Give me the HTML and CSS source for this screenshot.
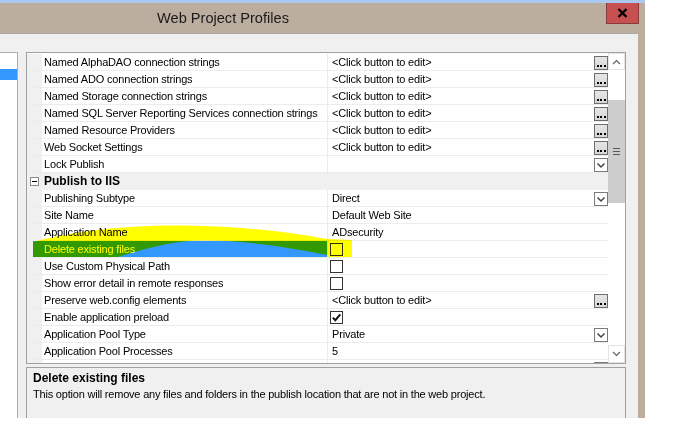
FILE: index.html
```html
<!DOCTYPE html>
<html>
<head>
<meta charset="utf-8">
<title>Web Project Profiles</title>
<link rel="stylesheet" href="styles.css">
</head>
<body>
<div class="window">
  <div class="topstrip"></div>
  <div class="titlebar">
    <div class="title">Web Project Profiles</div>
    <div class="close">
      <svg width="11" height="10" viewBox="0 0 11 10"><path d="M1.5 1 L9.5 9 M9.5 1 L1.5 9" stroke="#000" stroke-width="2.4" fill="none"/></svg>
    </div>
  </div>
  <div class="body">
    <div class="leftlist"><div class="lsel"></div></div>
    <div class="main">
      <div class="grid">
        <div class="rows">
          <div class="row"><div class="mg"></div><div class="name">Named AlphaDAO connection strings</div><div class="val"><span class="vt">&lt;Click button to edit&gt;</span><span class="dots"><i></i><i></i><i></i></span></div></div>
          <div class="row"><div class="mg"></div><div class="name">Named ADO connection strings</div><div class="val"><span class="vt">&lt;Click button to edit&gt;</span><span class="dots"><i></i><i></i><i></i></span></div></div>
          <div class="row"><div class="mg"></div><div class="name">Named Storage connection strings</div><div class="val"><span class="vt">&lt;Click button to edit&gt;</span><span class="dots"><i></i><i></i><i></i></span></div></div>
          <div class="row"><div class="mg"></div><div class="name">Named SQL Server Reporting Services connection strings</div><div class="val"><span class="vt">&lt;Click button to edit&gt;</span><span class="dots"><i></i><i></i><i></i></span></div></div>
          <div class="row"><div class="mg"></div><div class="name">Named Resource Providers</div><div class="val"><span class="vt">&lt;Click button to edit&gt;</span><span class="dots"><i></i><i></i><i></i></span></div></div>
          <div class="row"><div class="mg"></div><div class="name">Web Socket Settings</div><div class="val"><span class="vt">&lt;Click button to edit&gt;</span><span class="dots"><i></i><i></i><i></i></span></div></div>
          <div class="row"><div class="mg"></div><div class="name">Lock Publish</div><div class="val"><span class="vt"></span><span class="dd"><svg width="12" height="12" viewBox="0 0 12 12"><path d="M2.5 4.5 L6 8 L9.5 4.5" stroke="#444" stroke-width="1.5" fill="none"/></svg></span></div></div>
          <div class="row cat"><div class="mg"><span class="minus"><b></b></span></div><div class="name">Publish to IIS</div><div class="val"></div></div>
          <div class="row"><div class="mg"></div><div class="name">Publishing Subtype</div><div class="val"><span class="vt">Direct</span><span class="dd"><svg width="12" height="12" viewBox="0 0 12 12"><path d="M2.5 4.5 L6 8 L9.5 4.5" stroke="#444" stroke-width="1.5" fill="none"/></svg></span></div></div>
          <div class="row"><div class="mg"></div><div class="name">Site Name</div><div class="val"><span class="vt">Default Web Site</span></div></div>
          <div class="row"><div class="mg"></div><div class="name">Application Name</div><div class="val"><span class="vt">ADsecurity</span></div></div>
          <div class="row sel"><div class="mg"></div><div class="name">Delete existing files</div><div class="val"><span class="cb"></span></div></div>
          <div class="row"><div class="mg"></div><div class="name">Use Custom Physical Path</div><div class="val"><span class="cb"></span></div></div>
          <div class="row"><div class="mg"></div><div class="name">Show error detail in remote responses</div><div class="val"><span class="cb"></span></div></div>
          <div class="row"><div class="mg"></div><div class="name">Preserve web.config elements</div><div class="val"><span class="vt">&lt;Click button to edit&gt;</span><span class="dots"><i></i><i></i><i></i></span></div></div>
          <div class="row"><div class="mg"></div><div class="name">Enable application preload</div><div class="val"><span class="cb"><svg width="11" height="11" viewBox="0 0 11 11"><path d="M1.8 5.6 L4.3 8.2 L9.3 2.4" stroke="#111" stroke-width="2" fill="none"/></svg></span></div></div>
          <div class="row"><div class="mg"></div><div class="name">Application Pool Type</div><div class="val"><span class="vt">Private</span><span class="dd"><svg width="12" height="12" viewBox="0 0 12 12"><path d="M2.5 4.5 L6 8 L9.5 4.5" stroke="#444" stroke-width="1.5" fill="none"/></svg></span></div></div>
          <div class="row"><div class="mg"></div><div class="name">Application Pool Processes</div><div class="val"><span class="vt">5</span></div></div>
          <div class="row partial"><div class="mg"></div><div class="name">Load user profile of Application pool?</div><div class="val"><span class="vt">Default</span><span class="dd"><svg width="12" height="12" viewBox="0 0 12 12"><path d="M2.5 4.5 L6 8 L9.5 4.5" stroke="#444" stroke-width="1.5" fill="none"/></svg></span></div></div>
        </div>
        <div class="sb">
          <div class="sbbtn up"><svg width="9" height="6" viewBox="0 0 9 6"><path d="M1 5 L4.5 1.5 L8 5" stroke="#606060" stroke-width="1.1" fill="none"/></svg></div>
          <div class="track1"></div>
          <div class="thumb"><i></i><i></i><i></i></div>
          <div class="track2"></div>
          <div class="sbbtn down"><svg width="9" height="6" viewBox="0 0 9 6"><path d="M1 1 L4.5 4.5 L8 1" stroke="#606060" stroke-width="1.1" fill="none"/></svg></div>
        </div>
      </div>
      <div class="desc">
        <div class="dtitle">Delete existing files</div>
        <div class="dtext">This option will remove any files and folders in the publish location that are not in the web project.</div>
      </div>
    </div>
  </div>
</div>
<svg class="hl" width="675" height="429" viewBox="0 0 675 429">
  <path d="M33 242 C90 226 200 216 327 239 L352 240 L352 257 L327 257 L327 255 C285 246 220 237 180 242 C158 245 140 250 118 257 L33 257 Z" fill="#ffff00"/>
</svg>
</body>
</html>
```

FILE: styles.css
```css
* { box-sizing: border-box; }
html, body {
  margin: 0;
  padding: 0;
  width: 675px;
  height: 429px;
  overflow: hidden;
  background: #ffffff;
  font-family: "Liberation Sans", Arial, sans-serif;
}
.window {
  width: 645px;
  height: 418px;
  background: #bcae9f;
  display: flex;
  flex-direction: column;
}
.topstrip {
  height: 3px;
  background: #abc8ee;
}
.titlebar {
  height: 30px;
  display: flex;
  align-items: flex-start;
}
.title {
  margin-left: 157px;
  margin-top: 7px;
  font-size: 14.6px;
  line-height: 17px;
  color: #1a1a1a;
}
.close {
  margin-left: auto;
  margin-right: 6px;
  width: 33px;
  height: 21px;
  background: #c75050;
  border: 1px solid #8a3c3c;
  border-top: none;
  display: flex;
  align-items: center;
  justify-content: center;
}
.body {
  flex: 1;
  margin-right: 7px;
  background: #f0f0f0;
  border-top: 1px solid #a8a8a8;
  display: flex;
}
.leftlist {
  width: 18px;
  margin-top: 18px;
  background: #ffffff;
  border-top: 1px solid #abadb3;
  border-right: 1px solid #abadb3;
  padding-top: 16px;
}
.lsel {
  height: 11px;
  background: #3399ff;
}
.main {
  margin-left: 8px;
  margin-top: 18px;
  width: 600px;
  display: flex;
  flex-direction: column;
}
.grid {
  height: 312px;
  border: 1px solid #a0a0a0;
  background: #ffffff;
  display: flex;
  overflow: hidden;
  flex-shrink: 0;
}
.rows {
  flex: 1;
  padding-top: 1px;
  font-size: 11px;
  letter-spacing: -0.18px;
  color: #000;
  overflow: hidden;
}
.row {
  height: 17px;
  display: flex;
  border-bottom: 1px solid #ececec;
}
.mg {
  width: 15px;
  background: #f0f0f0;
  display: flex;
  align-items: center;
  padding-left: 3px;
}
.name {
  width: 285px;
  padding-left: 2px;
  line-height: 16px;
  white-space: nowrap;
  overflow: hidden;
}
.val {
  flex: 1;
  display: flex;
  align-items: center;
  padding-left: 4px;
  border-left: 1px solid #ececec;
}
.vt {
  flex: 1;
  line-height: 16px;
  white-space: nowrap;
}
.dots {
  width: 14px;
  height: 14px;
  align-self: flex-end;
  border: 1px solid #6e6e6e;
  background: linear-gradient(#e6e6e6, #d6d6d6);
  display: flex;
  justify-content: center;
  align-items: flex-end;
  gap: 1.5px;
  padding-bottom: 2px;
}
.dots i {
  width: 2px;
  height: 2px;
  background: #000;
}
.dd {
  width: 14px;
  height: 14px;
  align-self: flex-end;
  border: 1px solid #7a7a7a;
  background: #ffffff;
  display: flex;
  align-items: center;
  justify-content: center;
}
.cb {
  width: 13px;
  height: 13px;
  margin-left: -2px;
  border: 1px solid #333;
  background: #fff;
  display: flex;
  align-items: center;
  justify-content: center;
}
.cat {
  background: #f0f0f0;
  border-bottom-color: #f0f0f0;
}
.cat .name {
  font-weight: bold;
  font-size: 12px;
  letter-spacing: 0;
}
.cat .val {
  border-left: none;
}
.minus {
  width: 9px;
  height: 9px;
  border: 1px solid #8c8c8c;
  background: #fff;
  display: flex;
  align-items: center;
  justify-content: center;
}
.minus b {
  width: 5px;
  height: 1px;
  background: #000;
}
.sel .mg {
  background: linear-gradient(to right, #f0f0f0 6px, #3399ff 6px);
}
.sel .name {
  background: #3399ff;
  color: #ffffff;
}
.sb {
  width: 17px;
  display: flex;
  flex-direction: column;
  background: #ffffff;
}
.sbbtn {
  height: 17px;
  display: flex;
  align-items: center;
  justify-content: center;
  border: 1px solid #e4e4e4;
}
.sbbtn.down {
  height: 18px;
}
.track1 {
  height: 30px;
}
.thumb {
  height: 103px;
  background: #cdcdcd;
  display: flex;
  flex-direction: column;
  align-items: center;
  justify-content: center;
  gap: 2px;
}
.thumb i {
  width: 7px;
  height: 1px;
  background: #5a5a5a;
}
.track2 {
  flex: 1;
}
.desc {
  margin-top: 3px;
  flex: 1;
  border: 1px solid #a0a0a0;
  border-bottom: none;
  background: #f0f0f0;
  padding: 2px 6px;
  font-size: 11px;
  color: #000;
}
.dtitle {
  font-weight: bold;
  font-size: 12px;
  line-height: 16px;
}
.dtext {
  line-height: 16px;
  letter-spacing: -0.2px;
}
.hl {
  position: absolute;
  left: 0;
  top: 0;
  pointer-events: none;
  mix-blend-mode: multiply;
}
```
